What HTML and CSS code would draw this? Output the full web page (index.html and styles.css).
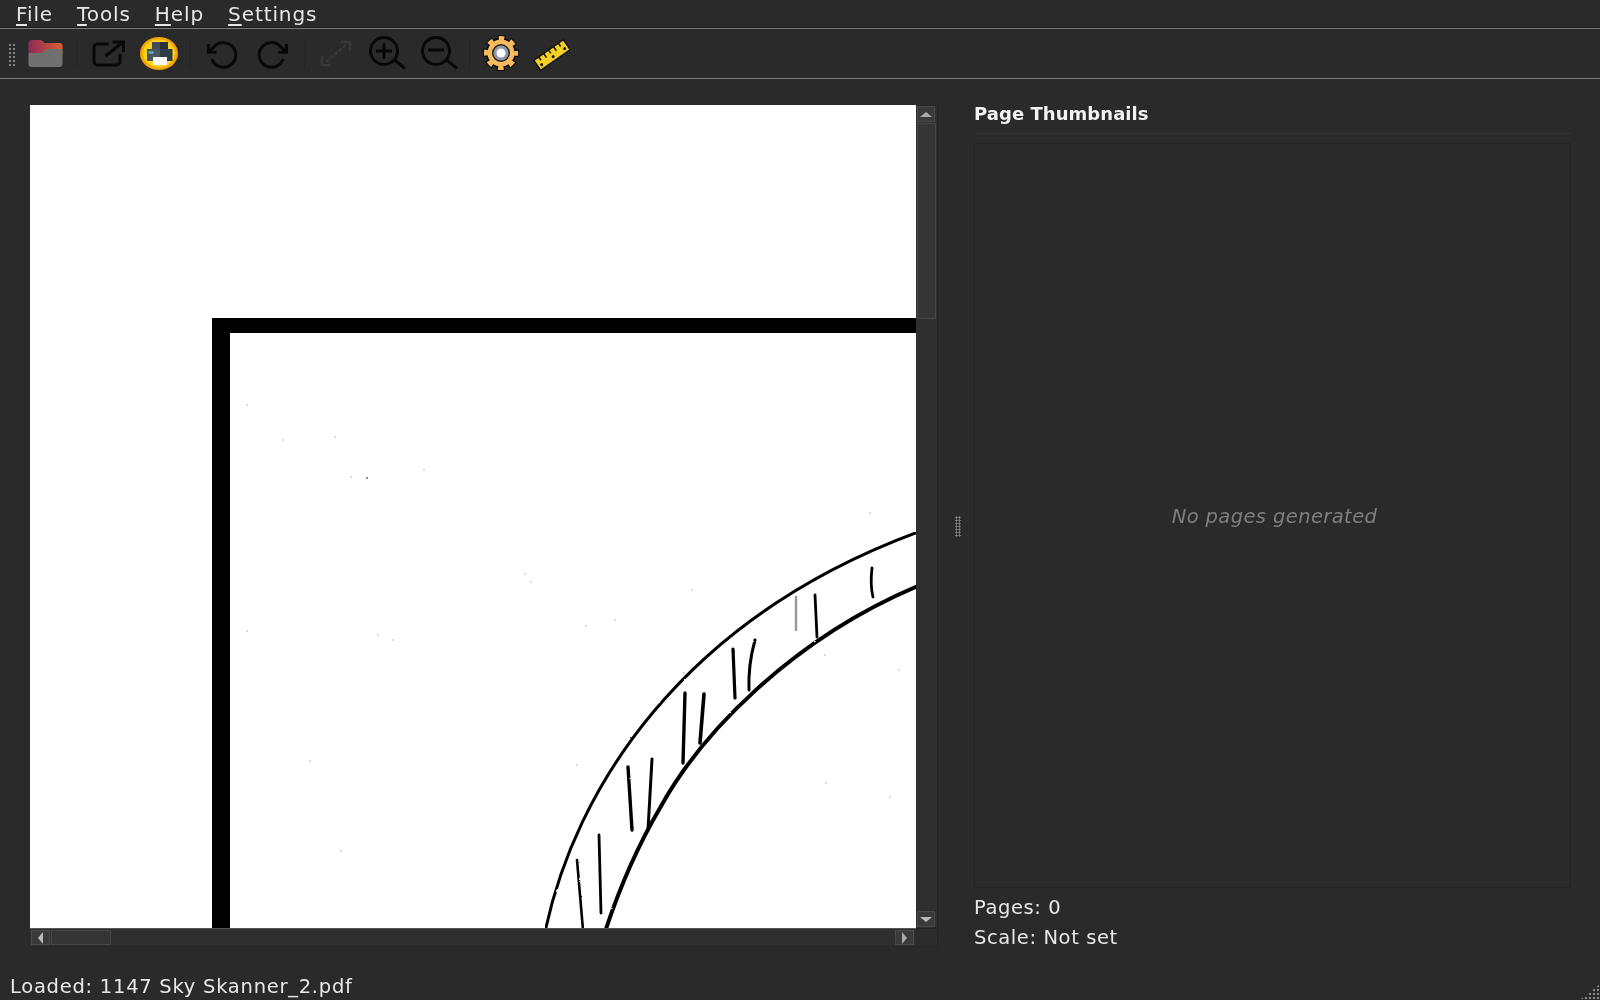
FILE: index.html
```html
<!DOCTYPE html>
<html lang="en">
<head>
<meta charset="utf-8">
<title>PDF Viewer</title>
<link rel="stylesheet" href="styles.css">
</head>
<body>
<div class="app">
  <nav class="menubar">
    <span class="menu-item"><u>F</u>ile</span>
    <span class="menu-item"><u>T</u>ools</span>
    <span class="menu-item"><u>H</u>elp</span>
    <span class="menu-item"><u>S</u>ettings</span>
  </nav>

  <div class="toolbar">
    <span class="grip"></span>
    <svg class="tool" viewBox="19.5 30 51 48">
      <defs>
        <linearGradient id="fold" x1="0" x2="1" y1="0" y2="0"><stop offset="0" stop-color="#8c2a5c"/><stop offset="1" stop-color="#dd5f2c"/></linearGradient>
      </defs>
      <path d="M28 53V43a3 3 0 0 1 3-3h9a3 3 0 0 1 2 1l2 2h15a3 3 0 0 1 3 3v8z" fill="url(#fold)"/>
      <path d="M28 64V54a1 1 0 0 1 1-1h12a4 4 0 0 0 3-2l1-1a3 3 0 0 1 2-1h12a3 3 0 0 1 3 3v12a3 3 0 0 1-3 3H31a3 3 0 0 1-3-3z" fill="#707070"/>
    </svg>
    <span class="sep"></span>
    <svg class="tool" viewBox="82.5 30 51 48" fill="none" stroke="#080808" stroke-width="3">
      <path d="M108 44H97a3.500 3.500 0 0 0-3.500 3.500V61.500A3.500 3.500 0 0 0 97 65h19a3.500 3.500 0 0 0 3.500-3.500V54"/>
      <path d="M105 56 122 42.500M112 42h11V52"/>
    </svg>
    <svg class="tool" viewBox="134 30 51 48">
      <ellipse cx="159" cy="53.500" rx="19" ry="16.500" fill="#f3a500"/>
      <ellipse cx="159" cy="53.500" rx="16" ry="14" fill="#ffd31c"/>
      <path d="M152 42h8v9h-8z" fill="#3f4c58"/>
      <path d="M160 42h8v9h-8z" fill="#28323b"/>
      <path d="M147 49h13v12h-13z" fill="#465663"/>
      <path d="M160 49h12.500v12h-12.500z" fill="#2f3b45"/>
      <path d="M148.500 51.500h5v2h-5z" fill="#4fc9d4"/>
      <path d="M153 57h14v8h-14z" fill="#fafafa"/>
    </svg>
    <span class="sep"></span>
    <svg class="tool" viewBox="196.500 30 51 48" fill="none" stroke="#080808">
      <g transform="translate(206.500 38.500) scale(1.370)" stroke-width="2.200">
        <path d="M1 4v6h6"/><path d="M3.510 15a9 9 0 1 0 2.130-9.360L1 10"/>
      </g>
    </svg>
    <svg class="tool" viewBox="247.500 30 51 48" fill="none" stroke="#080808">
      <g transform="translate(254.500 38.500) scale(1.370)" stroke-width="2.200">
        <path d="M23 4v6h-6"/><path d="M20.490 15a9 9 0 1 1-2.120-9.360L23 10"/>
      </g>
    </svg>
    <span class="sep"></span>
    <svg class="tool" viewBox="311 30 51 48" fill="none" stroke="#383838" stroke-width="2.500">
      <path d="M326 62 347 44" stroke-dasharray="4 1.500"/>
      <path d="M322 56v9h9M341 42h9v9"/>
    </svg>
    <svg class="tool" viewBox="362 30 51 48" fill="none" stroke="#080808" stroke-width="3">
      <circle cx="384" cy="51" r="13.500"/>
      <path d="M394.500 60 405 68.500"/>
      <path d="M376 51h16M384 43v16"/>
    </svg>
    <svg class="tool" viewBox="413 30 51 48" fill="none" stroke="#080808" stroke-width="3">
      <circle cx="436" cy="51" r="13.500"/>
      <path d="M446.500 60 457 68.500"/>
      <path d="M428 50h16"/>
    </svg>
    <span class="sep"></span>
    <svg class="tool" viewBox="477 30 51 48" fill="none">
      <circle cx="502" cy="53" r="14.500" stroke="#0c0c0c" stroke-width="7" stroke-dasharray="7.400 4" stroke-dashoffset="3.700"/>
      <circle cx="502" cy="53" r="15" fill="#0c0c0c"/>
      <circle cx="502" cy="53" r="14.500" stroke="#f8bb5e" stroke-width="5" stroke-dasharray="5.400 6" stroke-dashoffset="2.700"/>
      <circle cx="502" cy="53" r="13.500" fill="#f8bb5e"/>
      <circle cx="502" cy="53" r="9" fill="#222"/>
      <circle cx="502" cy="53" r="7.500" fill="#8f97a8"/>
      <circle cx="502" cy="53" r="4.500" fill="#fff"/>
    </svg>
    <svg class="tool" viewBox="528 30 51 48">
      <g transform="rotate(-35 553 55)">
        <rect x="535" y="49" width="36" height="12" fill="#f4d122" stroke="#161616" stroke-width="1.500"/>
        <path d="M541 49v4M547 49v5M553 49v4M559 49v5M565 49v4" stroke="#161616" stroke-width="1.500"/>
        <circle cx="539" cy="57" r="1.500" fill="#161616"/>
        <circle cx="553" cy="57" r="1.500" fill="#161616"/>
        <circle cx="567" cy="57" r="1.500" fill="#161616"/>
      </g>
    </svg>
  </div>

  <main class="workspace">
    <section class="viewer">
      <svg class="page" viewBox="30 105 886 823" preserveAspectRatio="none">
        <defs>
          <filter id="rough" x="0" y="0" width="100%" height="100%" filterUnits="objectBoundingBox">
            <feTurbulence type="fractalNoise" baseFrequency=".18" numOctaves="2" seed="4"/>
            <feDisplacementMap in="SourceGraphic" scale="1.600"/>
          </filter>
        </defs>
        <rect x="30" y="105" width="886" height="823" fill="#fff"/>
        <path d="M212 928V318H916V333H230V928z" fill="#000"/>
        <g class="ink" filter="url(#rough)" fill="none" stroke="#000" stroke-linecap="round" stroke-linejoin="round">
          <path d="M545 932C575 790 680 620 918 532" stroke-width="3"/>
          <path d="M605 932C622 880 640 842 660 808C700 735 790 640 918 586" stroke-width="4"/>
          <path d="M577 860 583 930" stroke-width="2.600"/>
          <path d="M599 835 601 913" stroke-width="2.800"/>
          <path d="M628 767 632 830" stroke-width="3.400"/>
          <path d="M652 759 648 830" stroke-width="3"/>
          <path d="M685 693 683 763" stroke-width="3.400"/>
          <path d="M704 694 700 743" stroke-width="3.600"/>
          <path d="M733 649 735 698" stroke-width="3.200"/>
          <path d="M755 640Q748 665 749 690" stroke-width="3"/>
          <path d="M796 597V630" stroke-width="2.400" stroke="#999"/>
          <path d="M815 595 817 637" stroke-width="2.800"/>
          <path d="M872 568Q870 585 873 597" stroke-width="2.800"/>
        </g>
        <g fill="#aaa">
          <circle cx="247" cy="405" r=".8"/><circle cx="283" cy="440" r=".8"/><circle cx="335" cy="437" r=".8"/>
          <circle cx="351" cy="477" r=".8"/><circle cx="367" cy="478" r=".9" fill="#555"/><circle cx="424" cy="470" r=".8"/>
          <circle cx="525" cy="574" r=".8"/><circle cx="531" cy="582" r=".8"/><circle cx="247" cy="631" r=".8"/>
          <circle cx="378" cy="635" r=".8"/><circle cx="393" cy="640" r=".8"/><circle cx="586" cy="626" r=".8"/>
          <circle cx="615" cy="620" r=".8"/><circle cx="310" cy="761" r=".8"/><circle cx="341" cy="851" r=".8"/>
          <circle cx="577" cy="765" r=".8"/><circle cx="692" cy="590" r=".8"/><circle cx="870" cy="513" r=".8"/>
          <circle cx="899" cy="670" r=".8"/><circle cx="890" cy="797" r=".8"/><circle cx="826" cy="783" r=".8"/>
          <circle cx="825" cy="655" r=".8"/><circle cx="684" cy="673" r=".8"/>
        </g>
      </svg>
      <div class="vscroll">
        <span class="sb-btn sb-btn-v"><i class="arrow arrow-up"></i></span>
        <span class="sb-handle sb-handle-v"></span>
        <span class="sb-btn sb-btn-v"><i class="arrow arrow-down"></i></span>
      </div>
      <div class="hscroll">
        <span class="sb-btn sb-btn-h"><i class="arrow arrow-left"></i></span>
        <span class="sb-handle sb-handle-h"></span>
        <span class="sb-btn sb-btn-h"><i class="arrow arrow-right"></i></span>
      </div>
      <div class="corner"></div>
    </section>

    <div class="splitter"><span class="split-dots"></span></div>

    <aside class="side">
      <h2 class="side-title">Page Thumbnails</h2>
      <div class="thumbs"><em>No pages generated</em></div>
      <p class="info">Pages: 0</p>
      <p class="info">Scale: Not set</p>
    </aside>
  </main>

  <footer class="status">
    <span>Loaded: 1147 Sky Skanner_2.pdf</span>
    <span class="size-grip"></span>
  </footer>
</div>
</body>
</html>
```

FILE: styles.css
```css
* { box-sizing: border-box; }
html, body { margin: 0; height: 100%; }
body {
  background: #2a2a2a;
  color: #e8e8e8;
  font-family: "DejaVu Sans", "Noto Sans", sans-serif;
  font-size: 19.500px;
  letter-spacing: .6px;
  overflow: hidden;
}
.app { display: flex; flex-direction: column; height: 1000px; filter: blur(.4px); }

.menubar {
  display: flex;
  height: 29px;
  padding-left: 16px;
  gap: 24px;
  align-items: center;
  border-bottom: 1px solid #7a7a7a;
  box-shadow: inset 0 -1px 0 #1e1e1e;
  line-height: 28px;
  font-size: 20px;
  letter-spacing: .9px;
}
.menu-item u { text-underline-offset: 3px; }

.toolbar {
  display: flex;
  align-items: stretch;
  height: 50px;
  padding: 1px 0 0 8px;
  border-bottom: 1px solid #7a7a7a;
}
.grip {
  width: 8px;
  height: 24px;
  margin: 13px 3.500px 0 0;
  background-image: radial-gradient(circle, #858585 1px, transparent 1.300px);
  background-size: 4px 4px;
}
.tool { width: 51px; height: 48px; flex: none; }
.sep { width: 12px; flex: none; margin: 10px 0; background: linear-gradient(#232323, #232323) center / 1px 100% no-repeat; }

.workspace {
  flex: 1;
  display: flex;
  padding: 26px 29px 0 30px;
  min-height: 0;
}
.viewer {
  display: grid;
  grid-template-columns: 886px 22px;
  grid-template-rows: 823px 19px;
  height: 842px;
  flex: none;
}
.page { width: 886px; height: 823px; display: block; }

.vscroll, .hscroll, .corner { background: #2f2f2f; }
.vscroll {
  display: flex;
  flex-direction: column;
  padding: 0 1px 1px 1px;
  border-right: 1px solid #242424;
  border-top: 1px solid #242424;
}
.hscroll {
  display: flex;
  align-items: stretch;
  padding: 1px 2px 1px 1px;
  border-top: 1px solid #555;
  border-bottom: 1px solid #242424;
  gap: 1px;
}
.corner { border: 1px solid #242424; border-width: 1px 1px 1px 0; background: #2c2c2c; }

.sb-btn {
  display: flex;
  align-items: center;
  justify-content: center;
  background: #3a3a3a;
  border: 1px solid #4a4a4a;
  flex: none;
}
.sb-btn-v { height: 16px; margin-right: 1px; }
.sb-btn-h { width: 19px; }
.sb-handle { background: #353535; border: 1px solid #474747; }
.sb-handle-v { height: 196px; margin: 1px 0 auto; flex: none; }
.sb-handle-h { width: 60px; margin-right: auto; flex: none; }

.arrow { width: 0; height: 0; display: block; border: 5px solid transparent; }
.arrow-up { border-bottom: 5px solid #aaa; border-top: 0; border-left-width: 6px; border-right-width: 6px; }
.arrow-down { border-top: 5px solid #bbb; border-bottom: 0; border-left-width: 6px; border-right-width: 6px; }
.arrow-left { border-right: 5px solid #bbb; border-left: 0; border-top-width: 6px; border-bottom-width: 6px; }
.arrow-right { border-left: 5px solid #aaa; border-right: 0; border-top-width: 6px; border-bottom-width: 6px; }

.splitter {
  width: 36px;
  flex: none;
  height: 842px;
  display: flex;
  align-items: center;
  padding: 0 0 0 17px;
}
.split-dots {
  width: 6px;
  height: 21px;
  background: radial-gradient(circle, #8a8a8a .9px, transparent 1.200px) 0 0 / 3px 3px;
}

.side { flex: 1; display: flex; flex-direction: column; min-width: 0; }
.side-title {
  margin: 0;
  font-size: 18px;
  font-weight: 700;
  letter-spacing: .05px;
  color: #f2f2f2;
  line-height: 18px;
  height: 29px;
  border-bottom: 1px solid #323232;
}
.thumbs {
  margin-top: 9px;
  height: 745px;
  display: flex;
  align-items: center;
  justify-content: center;
  border: 1px solid #232323;
  color: #7f7f7f;
  padding: 2px 0 0 4px;
  letter-spacing: .4px;
}
.thumbs em { font-style: italic; }
.info { margin: 0; line-height: 30px; }
.info:first-of-type { margin-top: 5px; }

.status {
  display: flex;
  justify-content: space-between;
  height: 44px;
  padding: 18px 0 0 10px;
  line-height: 26px;
  letter-spacing: .74px;
}
.size-grip {
  align-self: flex-end;
  width: 20px;
  height: 16px;
  background: radial-gradient(circle, #8c8c8c 1px, transparent 1.300px) 0 0 / 4px 4px;
  clip-path: polygon(100% 0, 100% 100%, 0 100%);
}
```
